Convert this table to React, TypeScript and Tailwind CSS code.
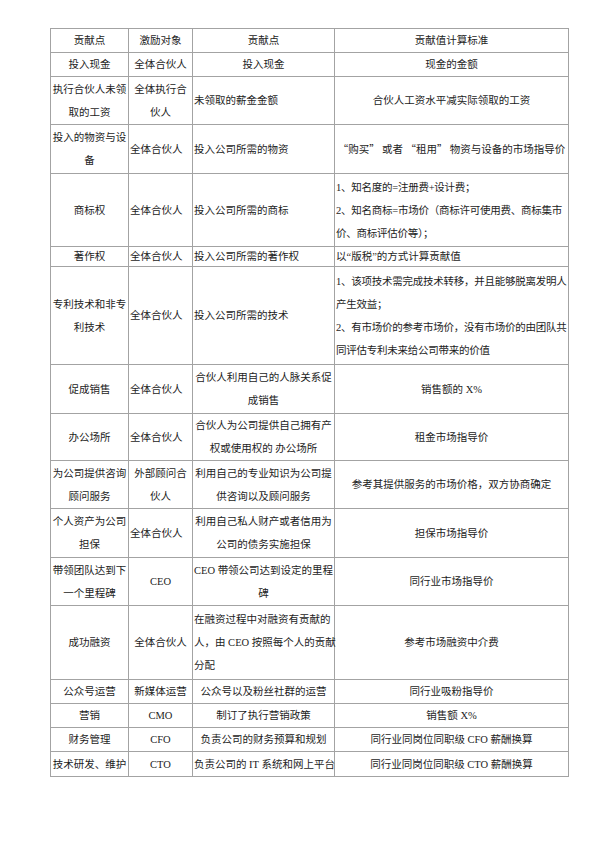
type Align = 'c' | 'l';
type Cell = { lines: React.ReactNode[]; align: Align; tight?: boolean };
type Row = { h: string; lead?: string; cells: Cell[] };

const ALIGN: Record<Align, string> = {
  c: 'text-center',
  l: 'text-left',
};

const c = (...lines: React.ReactNode[]): Cell => ({ lines, align: 'c' });
const l = (...lines: React.ReactNode[]): Cell => ({ lines, align: 'l' });

const rows: Row[] = [
  { h: 'h-[24px]', cells: [c('贡献点'), c('激励对象'), c('贡献点'), c('贡献值计算标准')] },
  { h: 'h-[23px]', cells: [c('投入现金'), c('全体合伙人'), c('投入现金'), c('现金的金额')] },
  {
    h: 'h-[48px]',
    cells: [c('执行合伙人未领', '取的工资'), c('全体执行合', '伙人'), l('未领取的薪金金额'), c('合伙人工资水平减实际领取的工资')],
  },
  {
    h: 'h-[49px]',
    cells: [
      c('投入的物资与设', '备'),
      l('全体合伙人'),
      l('投入公司所需的物资'),
      c(
        <span className="font-[family-name:'Noto_Sans_CJK_SC',sans-serif]">“购买” 或者 “租用” 物资与设备的市场指导价</span>
      ),
    ],
  },
  {
    h: 'h-[73px]',
    cells: [
      c('商标权'),
      l('全体合伙人'),
      l('投入公司所需的商标'),
      { lines: ['1、知名度的=注册费+设计费；', '2、知名商标=市场价（商标许可使用费、商标集市', '价、商标评估价等）；'], align: 'l', tight: true },
    ],
  },
  {
    h: 'h-[20px]',
    lead: 'leading-[18px]',
    cells: [c('著作权'), l('全体合伙人'), l('投入公司所需的著作权'), l('以“版税”的方式计算贡献值')],
  },
  {
    h: 'h-[98px]',
    cells: [
      c('专利技术和非专', '利技术'),
      l('全体合伙人'),
      l('投入公司所需的技术'),
      {
        lines: [
          '1、该项技术需完成技术转移，并且能够脱离发明人',
          '产生效益；',
          '2、有市场价的参考市场价，没有市场价的由团队共',
          '同评估专利未来给公司带来的价值',
        ],
        align: 'l',
        tight: true,
      },
    ],
  },
  {
    h: 'h-[49px]',
    cells: [c('促成销售'), l('全体合伙人'), c('合伙人利用自己的人脉关系促', '成销售'), c('销售额的 X%')],
  },
  {
    h: 'h-[46px]',
    cells: [c('办公场所'), l('全体合伙人'), c('合伙人为公司提供自己拥有产', '权或使用权的 办公场所'), c('租金市场指导价')],
  },
  {
    h: 'h-[48px]',
    cells: [
      c('为公司提供咨询', '顾问服务'),
      c('外部顾问合', '伙人'),
      c('利用自己的专业知识为公司提', '供咨询以及顾问服务'),
      c('参考其提供服务的市场价格，双方协商确定'),
    ],
  },
  {
    h: 'h-[49px]',
    cells: [
      c('个人资产为公司', '担保'),
      l('全体合伙人'),
      c('利用自己私人财产或者信用为', '公司的债务实施担保'),
      c('担保市场指导价'),
    ],
  },
  {
    h: 'h-[48px]',
    cells: [c('带领团队达到下', '一个里程碑'), c('CEO'), c('CEO 带领公司达到设定的里程', '碑'), c('同行业市场指导价')],
  },
  {
    h: 'h-[74px]',
    cells: [
      c('成功融资'),
      c('全体合伙人'),
      l('在融资过程中对融资有贡献的', '人，由 CEO 按照每个人的贡献', '分配'),
      c('参考市场融资中介费'),
    ],
  },
  { h: 'h-[24px]', cells: [c('公众号运营'), c('新媒体运营'), c('公众号以及粉丝社群的运营'), c('同行业吸粉指导价')] },
  { h: 'h-[24px]', cells: [c('营销'), c('CMO'), c('制订了执行营销政策'), c('销售额 X%')] },
  { h: 'h-[24px]', cells: [c('财务管理'), c('CFO'), c('负责公司的财务预算和规划'), c('同行业同岗位同职级 CFO 薪酬换算')] },
  { h: 'h-[25px]', cells: [c('技术研发、维护'), c('CTO'), l('负责公司的 IT 系统和网上平台'), c('同行业同岗位同职级 CTO 薪酬换算')] },
];

export default function App() {
  return (
    <div className="w-[595px] h-[841px] bg-white pl-[50px] pt-[28px] text-[#1c1c1c] font-[family-name:'Liberation_Serif','Noto_Sans_CJK_SC',serif] text-[10.5px]">
      <table className="table-fixed border-collapse w-[518px]">
        <colgroup>
          <col className="w-[78px]" />
          <col className="w-[64px]" />
          <col className="w-[142px]" />
          <col className="w-[234px]" />
        </colgroup>
        <tbody>
          {rows.map((row, i) => (
            <tr key={i} className={row.h}>
              {row.cells.map((cell, j) => (
                <td
                  key={j}
                  className={`border border-[#a3a3a3] align-middle px-[1px] p-0 whitespace-nowrap ${ALIGN[cell.align]} ${row.lead ?? 'leading-[23px]'} ${cell.tight ? 'tracking-[-0.25px]' : ''}`}
                >
                  {cell.lines.map((line, k) => (
                    <div key={k}>{line}</div>
                  ))}
                </td>
              ))}
            </tr>
          ))}
        </tbody>
      </table>
    </div>
  );
}
